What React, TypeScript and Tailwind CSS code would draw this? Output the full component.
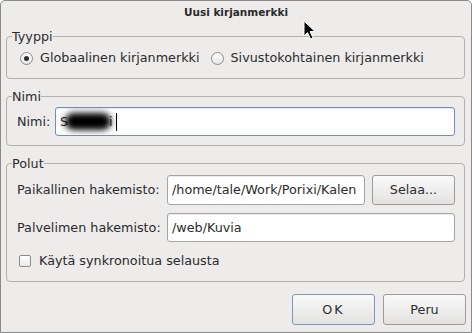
import React from 'react';

const font = { fontFamily: '"DejaVu Sans", sans-serif' };

const Radio = ({ checked, label }: { checked?: boolean; label: string }) => (
  <label className="flex items-center gap-[7px]">
    <span className="w-[13px] h-[13px] rounded-full border border-[#8c8c8c] bg-gradient-to-b from-white to-[#e6e6e6] flex items-center justify-center">
      {checked && <span className="w-[5px] h-[5px] rounded-full bg-[#2e2e2e]" />}
    </span>
    <span>{label}</span>
  </label>
);

const TextInput = ({ children, focused, className = '' }: { children?: React.ReactNode; focused?: boolean; className?: string }) => (
  <div
    className={`flex items-center bg-white rounded-[3px] border px-[4px] overflow-hidden whitespace-nowrap shadow-[inset_0_1px_1px_rgba(0,0,0,0.08)] ${
      focused ? 'border-[#6d8ebf]' : 'border-[#a5a5a5]'
    } ${className}`}
  >
    {children}
  </div>
);

const Button = ({ label, primary, className = '' }: { label: string; primary?: boolean; className?: string }) => (
  <button
    className={`flex items-center justify-center rounded-[3px] border bg-gradient-to-b from-[#fafafa] to-[#e3e2e1] text-[#2e2e2e] ${
      primary ? 'border-[#7b97c2]' : 'border-[#9c9c9c]'
    } ${className}`}
  >
    {label}
  </button>
);

const Group = ({ title, children, className = '' }: { title: string; children: React.ReactNode; className?: string }) => (
  <fieldset className={`ml-[5px] mr-[6px] border border-[#b3b1ae] rounded-[4px] pl-[10px] pr-[9px] ${className}`}>
    <legend className="-ml-[5px] leading-[15px]">{title}</legend>
    {children}
  </fieldset>
);

export default function App() {
  return (
    <div className="w-[472px] h-[333px] bg-white">
      <div
        className="relative w-[472px] h-[333px] bg-[#edeceb] border border-[#8a8a8a] rounded-t-[5px] text-[12.75px] text-[#2b2b2b] flex flex-col"
        style={font}
      >
        {/* title */}
        <div className="h-[23px] flex items-center justify-center font-bold text-[10.5px] pt-[1px]">
          Uusi kirjanmerkki
        </div>

        {/* Tyyppi */}
        <Group title="Tyyppi" className="mt-[5px] pt-[4px] pb-[10px]">
          <div className="h-[20px] flex items-center gap-[11px] pl-[3px]">
            <Radio checked label="Globaalinen kirjanmerkki" />
            <Radio label="Sivustokohtainen kirjanmerkki" />
          </div>
        </Group>

        {/* Nimi */}
        <Group title="Nimi" className="mt-[10px] pt-[3px] pb-[9px]">
          <div className="flex items-center">
            <span className="w-[38px]">Nimi:</span>
            <TextInput focused className="flex-1 h-[29px]">
              <span>S</span>
              <span className="inline-block w-[46px] h-[17px] rounded-full bg-black blur-[3px] -ml-[3px]" />
              <span className="-ml-[2px]">i</span>
              <span className="inline-block w-[1px] h-[18px] bg-black ml-[3px]" />
            </TextInput>
          </div>
        </Group>

        {/* Polut */}
        <Group title="Polut" className="mt-[10px] pt-[4px] pb-[10px]">
          <div className="flex items-center">
            <span className="w-[150px]">Paikallinen hakemisto:</span>
            <TextInput className="w-[198px] h-[30px]">/home/tale/Work/Porixi/Kalen</TextInput>
            <Button label="Selaa..." className="ml-[7px] w-[83px] h-[30px]" />
          </div>
          <div className="flex items-center mt-[8px]">
            <span className="w-[150px]">Palvelimen hakemisto:</span>
            <TextInput className="flex-1 h-[29px]">/web/Kuvia</TextInput>
          </div>
          <label className="flex items-center gap-[8px] h-[20px] mt-[9px] pl-[2px]">
            <span className="w-[12px] h-[12px] border border-[#8c8c8c] rounded-[2px] bg-gradient-to-b from-white to-[#e8e8e8]" />
            <span>Käytä synkronoitua selausta</span>
          </label>
        </Group>

        {/* buttons */}
        <div className="flex justify-end gap-[8px] mt-[12px] pr-[5px]">
          <Button primary label="OK" className="w-[83px] h-[31px] tracking-[2px]" />
          <Button label="Peru" className="w-[83px] h-[31px]" />
        </div>

        {/* mouse pointer */}
        <svg className="absolute left-[302px] top-[19px]" width="14" height="20" viewBox="0 0 14 20">
          <path d="M1 1 L1 16 L4.5 12.5 L7.5 19 L10 18 L7 11.5 L12 11.5 Z" fill="#000" stroke="#fff" strokeWidth="1" />
        </svg>
      </div>
    </div>
  );
}
